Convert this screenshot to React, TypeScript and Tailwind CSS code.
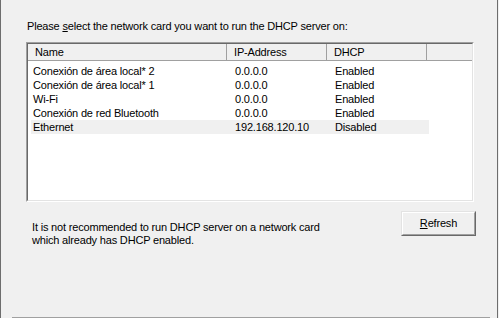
import React from "react";

const ADAPTERS = [
  { name: "Conexión de área local* 2", ip: "0.0.0.0", dhcp: "Enabled" },
  { name: "Conexión de área local* 1", ip: "0.0.0.0", dhcp: "Enabled" },
  { name: "Wi-Fi", ip: "0.0.0.0", dhcp: "Enabled" },
  { name: "Conexión de red Bluetooth", ip: "0.0.0.0", dhcp: "Enabled" },
  { name: "Ethernet", ip: "192.168.120.10", dhcp: "Disabled", selected: true },
];

export default function App() {
  return (
    <div className="flex h-[318px] w-[499px] bg-[#f0f0f0] text-[11px] leading-[13px] tracking-[-0.18px] text-black font-['Liberation_Sans',Arial,sans-serif]">
      {/* window left edge */}
      <div className="w-px bg-[#6d6d6d]" />

      <div className="flex w-[496px] flex-col">
        <p className="mt-[20px] pl-[26px]">
          Please <u>s</u>elect the network card you want to run the DHCP server on:
        </p>

        {/* adapter list */}
        <div className="ml-[25px] mt-[9px] h-[160px] w-[448px] border border-t-[#a0a0a0] border-l-[#a0a0a0] border-b-white border-r-white">
          <div className="h-full w-full border border-t-[#696969] border-l-[#696969] border-b-[#e3e3e3] border-r-[#e3e3e3] bg-white">
            <div className="flex h-[17px] border-b border-[#a0a0a0] bg-[#f0f0f0] leading-[16px]">
              <div className="w-[199px] border-r border-[#a0a0a0] pl-[7px]">Name</div>
              <div className="w-[100px] border-r border-[#a0a0a0] pl-[7px]">IP-Address</div>
              <div className="w-[100px] border-r border-[#a0a0a0] pl-[7px]">DHCP</div>
              <div className="flex-1" />
            </div>
            <div className="ml-[3px] mt-[3px] flex flex-col">
              {ADAPTERS.map((a) => (
                <div
                  key={a.name}
                  className={`flex h-[14px] w-[398px] leading-[14px] ${a.selected ? "bg-[#f0f0f0]" : ""}`}
                >
                  <div className="w-[196px] pl-[2px]">{a.name}</div>
                  <div className="w-[100px] pl-[8px]">{a.ip}</div>
                  <div className="w-[102px] pl-[8px]">{a.dhcp}</div>
                </div>
              ))}
            </div>
          </div>
        </div>

        {/* note + refresh */}
        <div className="mt-[9px] flex items-start">
          <p className="ml-[31px] mt-[10px] w-[300px]">
            It is not recommended to run DHCP server on a network card
            <br />
            which already has DHCP enabled.
          </p>
          <button className="ml-[69px] h-[25px] w-[75px] border border-t-[#e3e3e3] border-l-[#e3e3e3] border-b-[#696969] border-r-[#696969] bg-[#f0f0f0]">
            <span className="flex h-full w-full items-center justify-center border border-t-white border-l-white border-b-[#a0a0a0] border-r-[#a0a0a0]">
              <span>
                <u>R</u>efresh
              </span>
            </span>
          </button>
        </div>

        <div className="flex-1" />
        {/* bottom frame line */}
        <div className="ml-[11px] h-px w-[478px] bg-[#a0a0a0]" />
      </div>

      {/* window right edge */}
      <div className="w-px bg-[#6d6d6d]" />
    </div>
  );
}
